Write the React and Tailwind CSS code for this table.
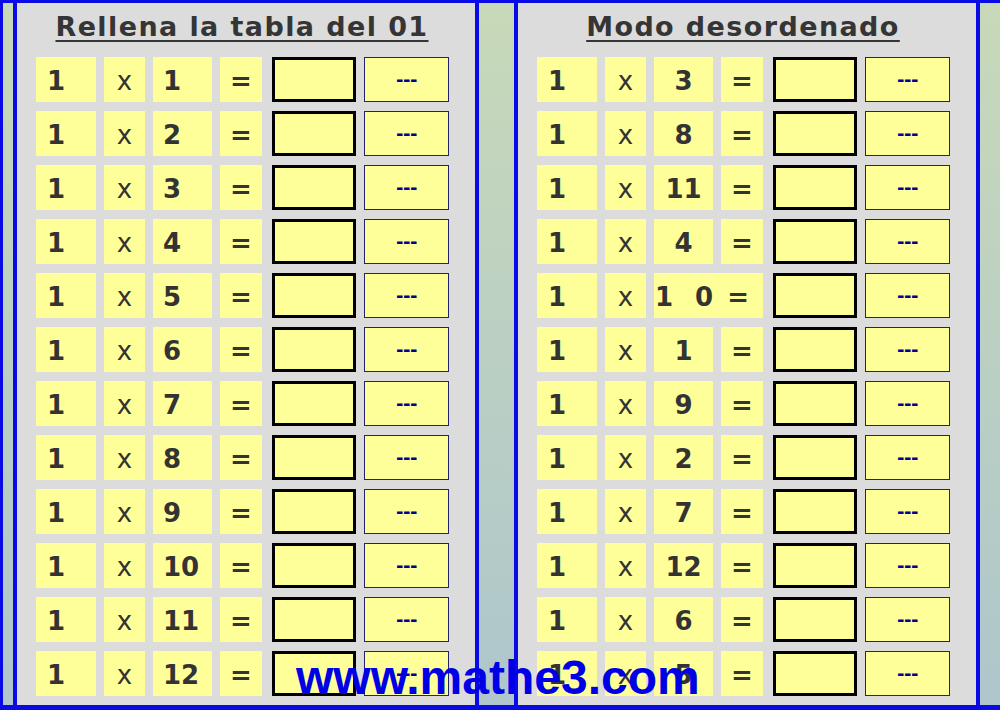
const ordered = [1, 2, 3, 4, 5, 6, 7, 8, 9, 10, 11, 12];
const shuffled = [3, 8, 11, 4, "1 0", 1, 9, 2, 7, 12, 6, 5];

const Cell = ({ children, className = "" }) => (
  <div className={`h-[45px] bg-[#ffff99] flex items-center pt-[3px] ${className}`}>
    {children}
  </div>
);

const Row = ({ b, center }) => {
  const split = b === "1 0";
  return (
    <>
      <Cell className="pl-[11px] font-bold">1</Cell>
      <Cell className="justify-center">x</Cell>
      {split ? (
        <Cell className="col-span-2 pl-[1px] font-bold">
          <span>1</span>
          <span className="ml-[22px]">0</span>
          <span className="ml-[14px]">=</span>
        </Cell>
      ) : (
        <>
          <Cell className={`font-bold ${center ? "justify-center" : "pl-[10px]"}`}>{b}</Cell>
          <Cell className="justify-center font-bold">=</Cell>
        </>
      )}
      <div className="h-[45px] ml-[2px] border-[3px] border-black bg-[#ffff99]" />
      <button className="h-[45px] border border-[#23236e] bg-[#ffff99] text-[#00009a] font-bold text-[18px] tracking-[-0.5px] leading-none">
        ---
      </button>
    </>
  );
};

const Panel = ({ title, items, center }) => (
  <div className="w-[466px] h-full shrink-0 border-x-4 border-[#0a0ae6] bg-[#dcdcdc] flex flex-col">
    <div className="h-[54px] pt-[10px] pl-[19px] w-[431px] text-center">
      <span className="text-[27px] leading-none font-bold text-[#353535] underline decoration-2 underline-offset-[4px] tracking-[1.4px]">
        {title}
      </span>
    </div>
    <div className="pl-[19px] grid grid-cols-[60px_41px_59px_42px_86px_85px] gap-x-2 gap-y-[9px] text-[26px] leading-none text-[#333333]">
      {items.map((b, i) => (
        <Row key={i} b={b} center={center} />
      ))}
    </div>
  </div>
);

export default function App() {
  return (
    <div className="relative w-[1000px] h-[710px] overflow-hidden border-t-[3px] border-b-[5px] border-l-[3px] border-[#0a0ae6] bg-gradient-to-b from-[#c8d9b8] to-[#aec6cc] pl-[10px] flex gap-[35px] font-['DejaVu_Sans',Verdana,sans-serif]">
      <Panel title="Rellena la tabla del 01" items={ordered} />
      <Panel title="Modo desordenado" items={shuffled} center />
      <div className="absolute left-[293px] top-[651px] text-[48px] leading-none font-bold text-[#0000e6] font-['Liberation_Sans',Arial,sans-serif]">
        www.mathe3.com
      </div>
    </div>
  );
}
